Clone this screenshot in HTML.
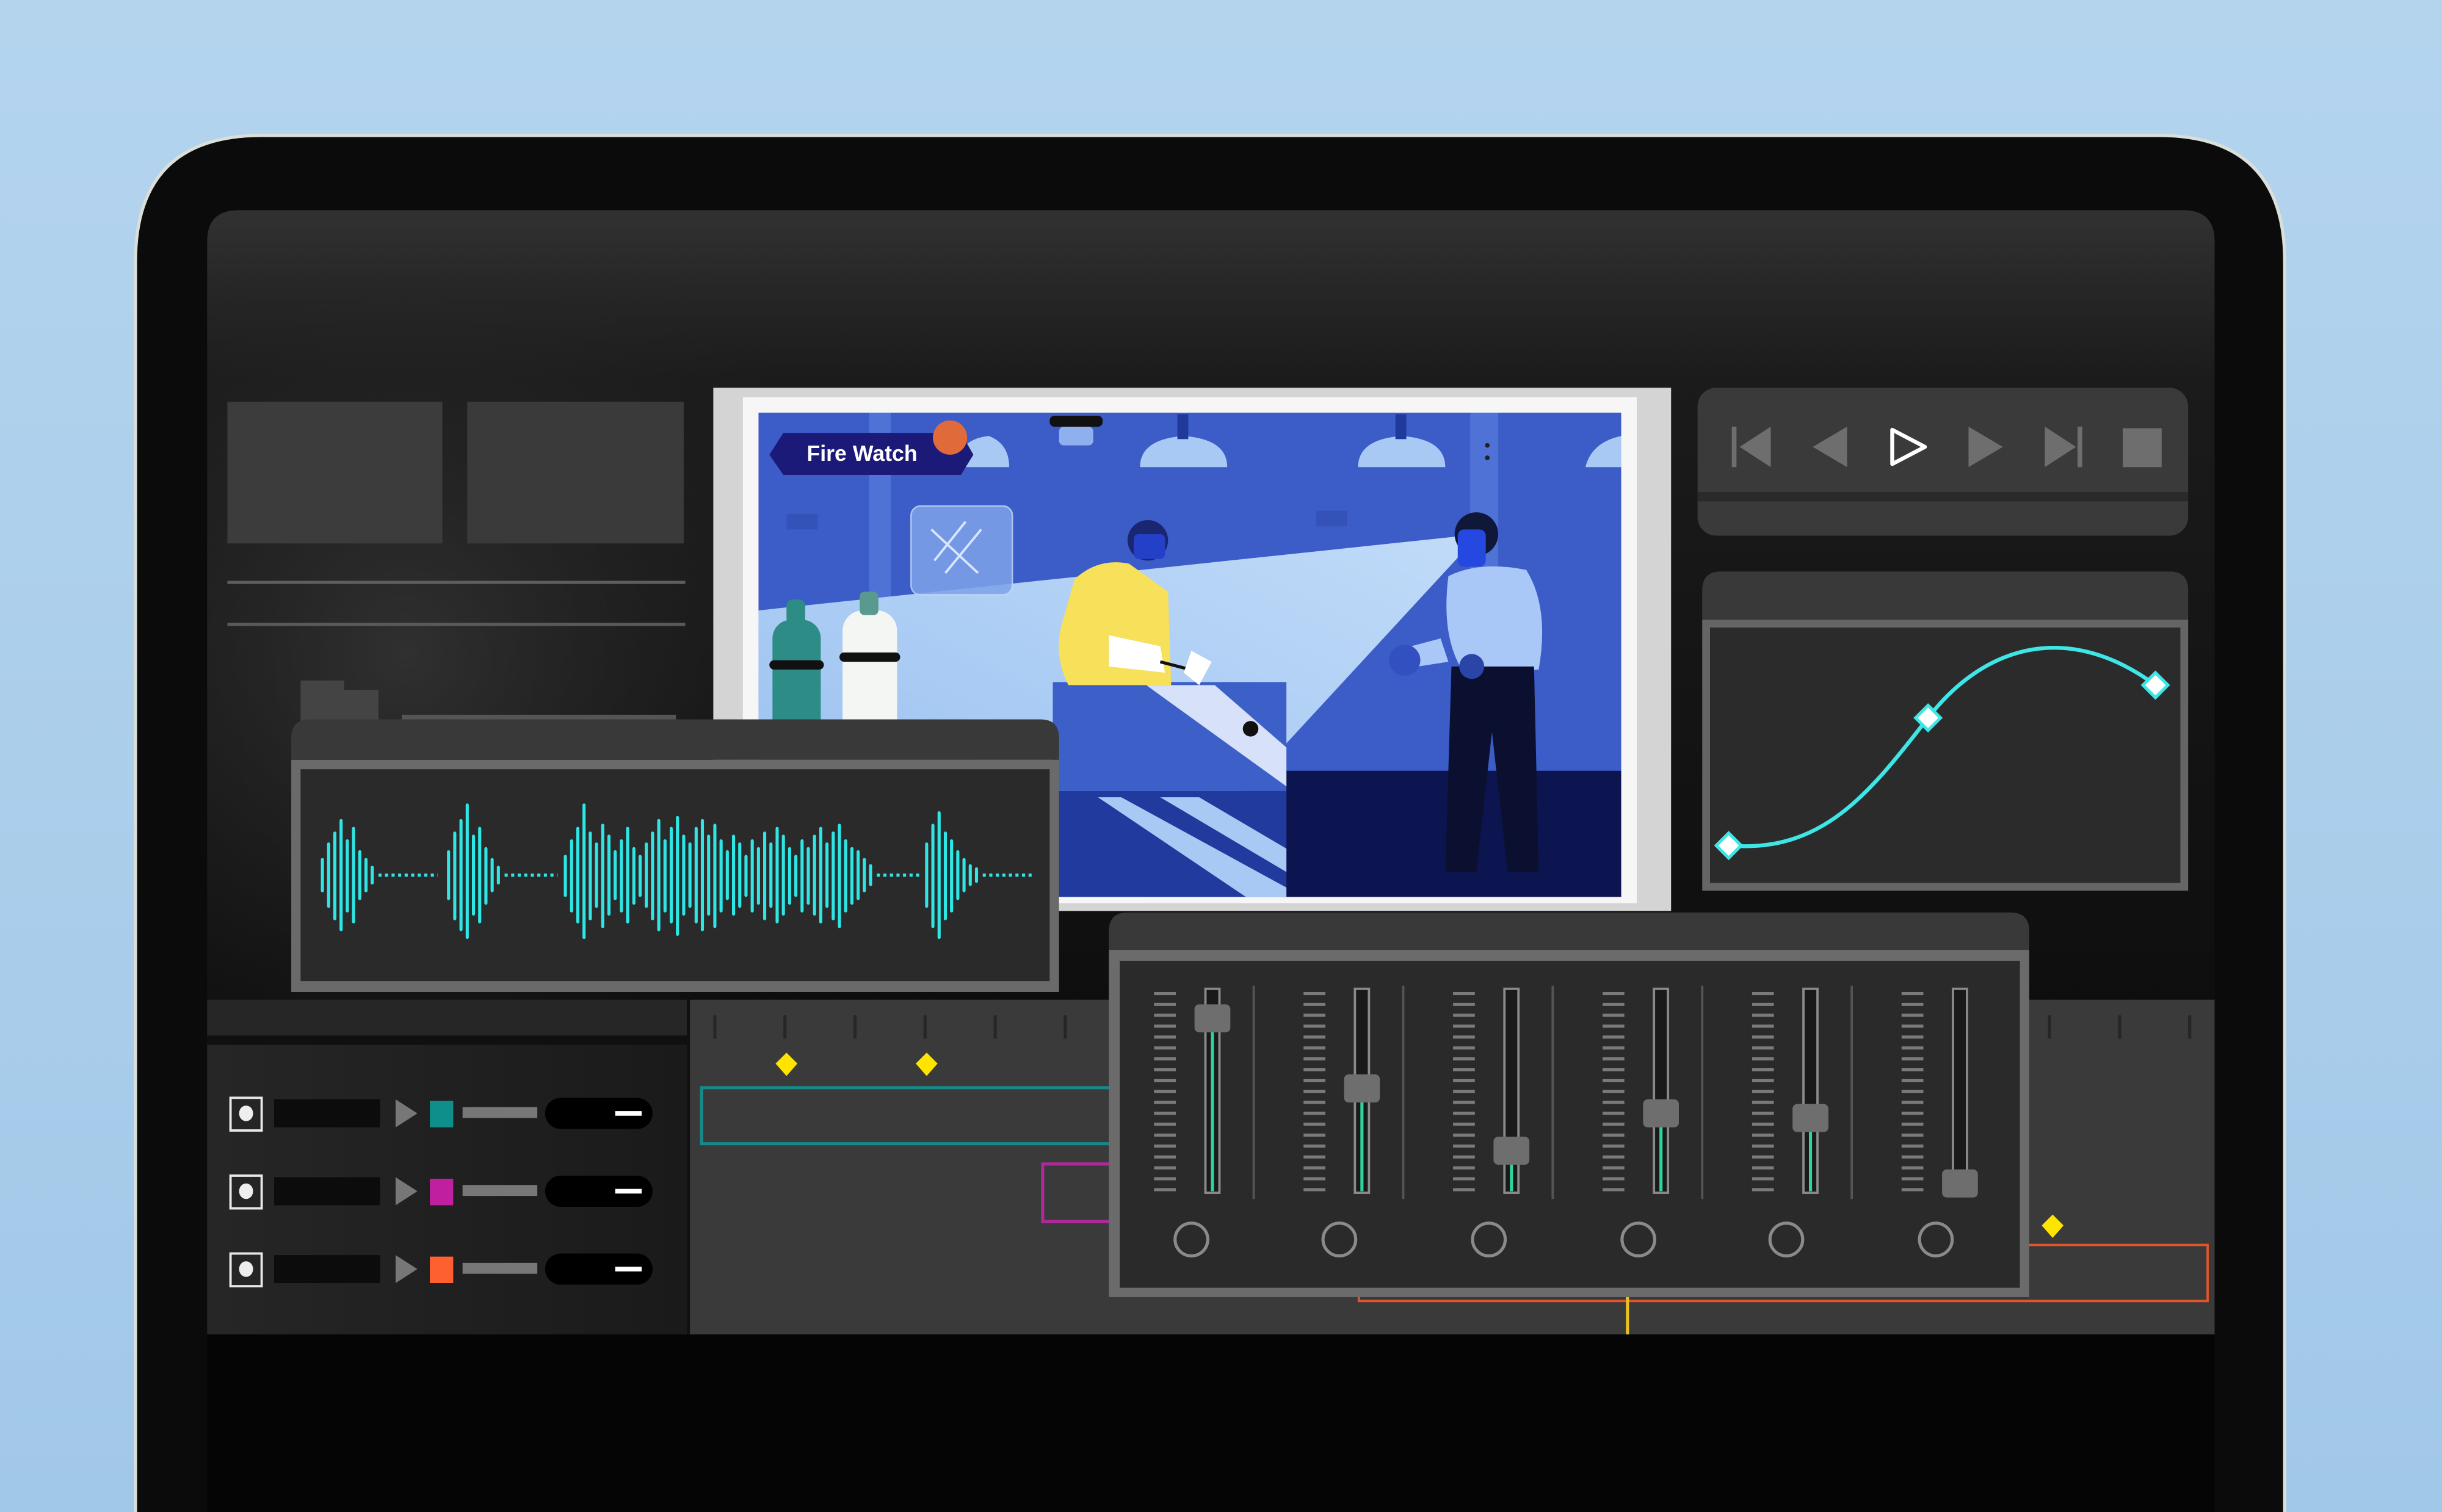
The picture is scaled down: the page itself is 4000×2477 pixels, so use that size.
<!DOCTYPE html>
<html><head><meta charset="utf-8"><style>
html,body{margin:0;padding:0;width:4000px;height:2477px;overflow:hidden;background:#a9cdea}
svg{display:block;position:absolute;left:0;top:0}
</style></head><body>
<svg width="4000" height="2477" viewBox="0 0 1568 971" xmlns="http://www.w3.org/2000/svg">
<defs>
<linearGradient id="bg" x1="0" y1="0" x2="0" y2="1"><stop offset="0" stop-color="#b4d4ee"/><stop offset="1" stop-color="#a2c8e8"/></linearGradient>
<linearGradient id="scr" x1="0" y1="0" x2="0" y2="1"><stop offset="0" stop-color="#313131"/><stop offset="0.13" stop-color="#1b1b1b"/><stop offset="0.5" stop-color="#111"/><stop offset="1" stop-color="#050505"/></linearGradient>
<radialGradient id="lft" cx="260" cy="420" r="300" gradientUnits="userSpaceOnUse"><stop offset="0" stop-color="#333" stop-opacity="0.9"/><stop offset="1" stop-color="#222" stop-opacity="0"/></radialGradient>
<linearGradient id="tl" x1="0" y1="0" x2="1" y2="0"><stop offset="0" stop-color="#262626"/><stop offset="1" stop-color="#1a1a1a"/></linearGradient>
<linearGradient id="beam" x1="1" y1="0" x2="0" y2="1"><stop offset="0" stop-color="#c8e2fb"/><stop offset="1" stop-color="#9cc4f2"/></linearGradient>
<clipPath id="pic"><rect x="487" y="265" width="554" height="311"/></clipPath>
</defs>
<rect width="1568" height="971" fill="url(#bg)"/>
<!-- bezel -->
<path d="M86 971 L86 168 Q86 86 168 86 L1386 86 Q1468 86 1468 168 L1468 971Z" fill="#dadfd9"/>
<path d="M88 971 L88 168 Q88 88 168 88 L1386 88 Q1466 88 1466 168 L1466 971Z" fill="#0b0b0b"/>
<!-- screen -->
<path d="M133 971 L133 155 Q133 135 153 135 L1402 135 Q1422 135 1422 155 L1422 971Z" fill="url(#scr)"/>
<rect x="133" y="180" width="460" height="470" fill="url(#lft)"/>
<!-- left panel -->
<rect x="146" y="258" width="138" height="91" fill="#3c3c3c"/>
<rect x="300" y="258" width="139" height="91" fill="#3a3a3a"/>
<rect x="146" y="373" width="294" height="2" fill="#5e5e5e"/>
<rect x="146" y="400" width="294" height="2" fill="#5a5a5a"/>
<rect x="193" y="437" width="28" height="26" fill="#444"/>
<rect x="219" y="443" width="24" height="20" fill="#444"/>
<rect x="258" y="459" width="176" height="4" fill="#555"/>
<!-- timeline -->
<rect x="133" y="642" width="308" height="215" fill="url(#tl)"/>
<rect x="133" y="642" width="308" height="23" fill="#262626"/>
<rect x="133" y="665" width="308" height="6" fill="#101010"/>
<rect x="441" y="642" width="2" height="215" fill="#111"/>
<rect x="443" y="642" width="979" height="215" fill="#3a3a3a"/>
<g stroke="#262626" stroke-width="2">
<line x1="459" y1="652" x2="459" y2="667"/><line x1="504" y1="652" x2="504" y2="667"/><line x1="549" y1="652" x2="549" y2="667"/><line x1="594" y1="652" x2="594" y2="667"/><line x1="639" y1="652" x2="639" y2="667"/><line x1="684" y1="652" x2="684" y2="667"/><line x1="1316" y1="652" x2="1316" y2="667"/><line x1="1361" y1="652" x2="1361" y2="667"/><line x1="1406" y1="652" x2="1406" y2="667"/>
</g>
<g fill="#ffe400"><path d="M505 676 L512 683 L505 691 L498 683Z"/><path d="M595 676 L602 683 L595 691 L588 683Z"/><path d="M1318 780 L1325 787 L1318 795 L1311 787Z"/></g>
<rect x="450.5" y="698.5" width="300" height="36" fill="none" stroke="#168a8a" stroke-width="2"/>
<rect x="669.5" y="747.5" width="60" height="37" fill="none" stroke="#b0289c" stroke-width="2"/>
<rect x="872.5" y="799.5" width="545" height="36" fill="none" stroke="#e0552a" stroke-width="1.5"/>
<rect x="1044" y="833" width="2" height="24" fill="#e8c020"/>
<rect x="133" y="857" width="1289" height="114" fill="#050505"/>
<!-- track rows -->
<g>
<g transform="translate(0,715)">
<rect x="148" y="-10" width="20" height="21" fill="none" stroke="#e8e8e8" stroke-width="1.5"/><ellipse cx="158" cy="0" rx="4.5" ry="5" fill="#eee"/>
<rect x="176" y="-9" width="68" height="18" fill="#0c0c0c"/><path d="M254 -9 L268 0 L254 9Z" fill="#777"/>
<rect x="276" y="-8" width="15" height="17" fill="#0f8f8c"/><rect x="297" y="-4" width="48" height="7" fill="#777"/>
<rect x="350" y="-10" width="69" height="20" rx="10" fill="#000"/><rect x="395" y="-1.5" width="17" height="3" fill="#fff"/></g>
<g transform="translate(0,765)">
<rect x="148" y="-10" width="20" height="21" fill="none" stroke="#e8e8e8" stroke-width="1.5"/><ellipse cx="158" cy="0" rx="4.5" ry="5" fill="#eee"/>
<rect x="176" y="-9" width="68" height="18" fill="#0c0c0c"/><path d="M254 -9 L268 0 L254 9Z" fill="#777"/>
<rect x="276" y="-8" width="15" height="17" fill="#c020a0"/><rect x="297" y="-4" width="48" height="7" fill="#777"/>
<rect x="350" y="-10" width="69" height="20" rx="10" fill="#000"/><rect x="395" y="-1.5" width="17" height="3" fill="#fff"/></g>
<g transform="translate(0,815)">
<rect x="148" y="-10" width="20" height="21" fill="none" stroke="#e8e8e8" stroke-width="1.5"/><ellipse cx="158" cy="0" rx="4.5" ry="5" fill="#eee"/>
<rect x="176" y="-9" width="68" height="18" fill="#0c0c0c"/><path d="M254 -9 L268 0 L254 9Z" fill="#777"/>
<rect x="276" y="-8" width="15" height="17" fill="#ff6030"/><rect x="297" y="-4" width="48" height="7" fill="#777"/>
<rect x="350" y="-10" width="69" height="20" rx="10" fill="#000"/><rect x="395" y="-1.5" width="17" height="3" fill="#fff"/></g>
</g>
<!-- video -->
<rect x="462" y="255" width="604" height="328" fill="#b8b8b8" transform="rotate(-0.6 760 420)"/>
<rect x="458" y="249" width="615" height="336" fill="#d4d4d4"/>
<rect x="477" y="255" width="574" height="325" fill="#f6f6f6"/>
<g clip-path="url(#pic)">
<rect x="487" y="265" width="554" height="311" fill="#3c5cc8"/>
<rect x="558" y="265" width="14" height="200" fill="#4f72d6"/>
<rect x="944" y="265" width="18" height="130" fill="#4f72d6"/>
<rect x="825" y="495" width="216" height="81" fill="#0d1550"/>
<rect x="505" y="330" width="20" height="10" fill="#3452b8"/><rect x="845" y="328" width="20" height="10" fill="#3452b8"/>
<polygon points="950,343 487,392 487,576 735,576" fill="url(#beam)" opacity="0.95"/>
<g fill="#a9c9f5">
<path d="M732 300 Q732 282 760 280 Q788 282 788 300Z"/><rect x="756" y="266" width="7" height="16" fill="#203a9c"/>
<path d="M872 300 Q872 282 900 280 Q928 282 928 300Z"/><rect x="896" y="266" width="7" height="16" fill="#203a9c"/>
<path d="M615 300 Q615 282 635 280 Q648 285 648 300Z"/>
<path d="M1018 300 Q1022 284 1041 280 L1041 300Z"/>
</g>
<rect x="674" y="267" width="34" height="7" rx="3" fill="#111"/><rect x="680" y="274" width="22" height="12" rx="3" fill="#8fb0ee"/>
<circle cx="955" cy="286" r="1.5" fill="#222"/><circle cx="955" cy="294" r="1.5" fill="#222"/>
<rect x="585" y="325" width="65" height="57" rx="6" fill="#7ea3ea" opacity="0.85" stroke="#c0d6fa"/>
<path d="M600 360 L620 335 M607 368 L630 340 M598 340 L628 368" stroke="#d8e6ff" stroke-width="1.5"/>
<rect x="496" y="398" width="31" height="80" rx="12" fill="#2d8c86"/><rect x="505" y="385" width="12" height="16" rx="4" fill="#2d8c86"/>
<rect x="494" y="424" width="35" height="6" rx="3" fill="#111"/>
<rect x="541" y="392" width="35" height="90" rx="13" fill="#f4f6f4"/><rect x="552" y="380" width="12" height="15" rx="3" fill="#5a9a8e"/>
<rect x="539" y="419" width="39" height="6" rx="3" fill="#111"/>
<rect x="676" y="438" width="150" height="70" fill="#3d5fc8"/>
<rect x="676" y="508" width="150" height="68" fill="#213a9e"/>
<polygon points="736,440 780,440 826,480 826,505" fill="#e8f0ff" opacity="0.9"/>
<polygon points="705,512 720,512 826,570 826,576 800,576" fill="#a9c9f5"/>
<polygon points="745,512 770,512 826,545 826,560" fill="#a9c9f5"/>
<circle cx="803" cy="468" r="5" fill="#111"/>
<path d="M690 372 Q705 358 725 362 L750 380 L752 440 L686 440 Q676 420 682 400Z" fill="#f7e05a"/>
<path d="M712 408 L745 415 L748 432 L712 428Z" fill="#fff"/>
<circle cx="737" cy="347" r="13" fill="#1a2670"/>
<rect x="728" y="343" width="20" height="16" rx="3" fill="#2540c8"/>
<path d="M745 425 L772 432" stroke="#111" stroke-width="2"/>
<path d="M765 418 L778 425 L770 440 L760 432Z" fill="#fff"/>
<path d="M930 370 Q950 360 980 366 Q995 390 988 430 L940 432 Q925 410 930 370Z" fill="#a9c7f7"/>
<path d="M925 410 L895 418 L898 430 L930 425Z" fill="#a9c7f7"/>
<circle cx="902" cy="424" r="10" fill="#3350c0"/>
<path d="M932 428 L985 428 L988 560 L968 560 L958 470 L948 560 L928 560Z" fill="#0c1030"/>
<circle cx="948" cy="343" r="14" fill="#10183a"/>
<rect x="936" y="340" width="18" height="24" rx="4" fill="#2548e0"/>
<circle cx="945" cy="428" r="8" fill="#2a44a8"/>
<polygon points="503,278 617,278 625,292 617,305 503,305 494,292" fill="#1c1a78"/>
<circle cx="610" cy="281" r="11" fill="#e06a3a"/>
<text x="518" y="296" font-family="Liberation Sans, sans-serif" font-weight="bold" font-size="14" fill="#fff">Fire Watch</text>
</g>
<!-- waveform panel -->
<path d="M187 474 Q187 462 199 462 L668 462 Q680 462 680 474 L680 488 L187 488Z" fill="#393939"/>
<rect x="187" y="488" width="493" height="149" fill="#6a6a6a"/>
<rect x="193" y="494" width="481" height="136" fill="#2a2a2a"/>
<g stroke="#2ee6e6" stroke-width="2" stroke-linecap="round">
<path d="M207 552v20M211 542v40M215 535v55M219 527v70M223 540v45M227 532v60M231 547v30M235 552v20M239 557v10
M288 547v30M292 535v55M296 527v70M300 517v85M304 537v50M308 532v60M312 545v35M316 552v20M320 557v10
M363 550v25M367 540v45M371 532v60M375 517v85M379 535v55M383 542v40M387 530v65M391 537v50M395 547v30M399 540v45M403 532v60M407 545v35M411 550v25M415 542v40M419 535v55M423 527v70M427 540v45M431 532v60M435 525v75M439 537v50M443 542v40M447 532v60M451 527v70M455 537v50M459 530v65M463 540v45M467 547v30M471 537v50M475 542v40M479 550v25M483 540v45M487 545v35M491 535v55M495 542v40M499 532v60M503 537v50M507 545v35M511 550v25M515 540v45M519 545v35M523 537v50M527 532v60M531 542v40M535 535v55M539 530v65M543 540v45M547 545v35M551 547v30M555 552v20M559 556v12
M595 542v40M599 530v65M603 522v80M607 535v55M611 540v45M615 547v30M619 552v20M623 556v12M627 558v8"/>
</g>
<g stroke="#2ee6e6" stroke-width="2" stroke-dasharray="2 2.2">
<line x1="243" y1="562" x2="281" y2="562"/><line x1="324" y1="562" x2="358" y2="562"/><line x1="563" y1="562" x2="592" y2="562"/><line x1="631" y1="562" x2="664" y2="562"/>
</g>
<!-- transport -->
<rect x="1090" y="249" width="315" height="95" rx="12" fill="#3a3a3a"/>
<rect x="1090" y="316" width="315" height="6" fill="#2a2a2a"/>
<g fill="#6e6e6e">
<rect x="1112" y="274" width="3" height="26"/><path d="M1137 274 L1117 287 L1137 300Z"/>
<path d="M1186 274 L1164 287 L1186 300Z"/>
<path d="M1264 274 L1286 287 L1264 300Z"/>
<path d="M1313 274 L1333 287 L1313 300Z"/><rect x="1334" y="274" width="3" height="26"/>
<rect x="1363" y="275" width="25" height="25"/>
</g>
<path d="M1215 276 L1236 287 L1215 298Z" fill="none" stroke="#fff" stroke-width="2.5" stroke-linejoin="round"/>
<!-- curve panel -->
<path d="M1093 379 Q1093 367 1105 367 L1393 367 Q1405 367 1405 379 L1405 398 L1093 398Z" fill="#393939"/>
<rect x="1093" y="398" width="312" height="174" fill="#656565"/>
<rect x="1098" y="403" width="302" height="164" fill="#2b2b2b"/>
<path d="M1110 543 C1170 548 1200 510 1238 461 S1330 400 1384 440" fill="none" stroke="#3ee6e6" stroke-width="2.5"/>
<g fill="#fff" stroke="#3ee6e6" stroke-width="2">
<path d="M1110 535 L1118 543 L1110 551 L1102 543Z"/><path d="M1238 453 L1246 461 L1238 469 L1230 461Z"/><path d="M1384 432 L1392 440 L1384 448 L1376 440Z"/>
</g>
<!-- mixer -->
<path d="M712 598 Q712 586 724 586 L1291 586 Q1303 586 1303 598 L1303 610 L712 610Z" fill="#393939"/>
<rect x="712" y="610" width="591" height="223" fill="#6b6b6b"/>
<rect x="719" y="617" width="578" height="210" fill="#2a2a2a"/>
<g stroke="#555" stroke-width="1.5">
<line x1="805" y1="633" x2="805" y2="770"/><line x1="901" y1="633" x2="901" y2="770"/><line x1="997" y1="633" x2="997" y2="770"/><line x1="1093" y1="633" x2="1093" y2="770"/><line x1="1189" y1="633" x2="1189" y2="770"/>
</g>
<g stroke="#7a7a7a" stroke-width="14" stroke-dasharray="2 5">
<line x1="748" y1="637" x2="748" y2="767"/><line x1="844" y1="637" x2="844" y2="767"/><line x1="940" y1="637" x2="940" y2="767"/><line x1="1036" y1="637" x2="1036" y2="767"/><line x1="1132" y1="637" x2="1132" y2="767"/><line x1="1228" y1="637" x2="1228" y2="767"/>
</g>
<g fill="#1a1a1a" stroke="#8a8a8a" stroke-width="1.5">
<rect x="774" y="635" width="9" height="131"/><rect x="870" y="635" width="9" height="131"/><rect x="966" y="635" width="9" height="131"/><rect x="1062" y="635" width="9" height="131"/><rect x="1158" y="635" width="9" height="131"/><rect x="1254" y="635" width="9" height="131"/>
</g>
<g stroke="#2fd49a" stroke-width="2">
<line x1="778.5" y1="654" x2="778.5" y2="765"/><line x1="874.5" y1="699" x2="874.5" y2="765"/><line x1="970.5" y1="739" x2="970.5" y2="765"/><line x1="1066.5" y1="715" x2="1066.5" y2="765"/><line x1="1162.5" y1="718" x2="1162.5" y2="765"/><line x1="1258.5" y1="760" x2="1258.5" y2="765"/>
</g>
<g fill="#6e6e6e">
<rect x="767" y="645" width="23" height="18" rx="3"/><rect x="863" y="690" width="23" height="18" rx="3"/><rect x="959" y="730" width="23" height="18" rx="3"/><rect x="1055" y="706" width="23" height="18" rx="3"/><rect x="1151" y="709" width="23" height="18" rx="3"/><rect x="1247" y="751" width="23" height="18" rx="3"/>
</g>
<g fill="none" stroke="#8a8a8a" stroke-width="2">
<circle cx="765" cy="796" r="10.5"/><circle cx="860" cy="796" r="10.5"/><circle cx="956" cy="796" r="10.5"/><circle cx="1052" cy="796" r="10.5"/><circle cx="1147" cy="796" r="10.5"/><circle cx="1243" cy="796" r="10.5"/>
</g>
</svg>
</body></html>
